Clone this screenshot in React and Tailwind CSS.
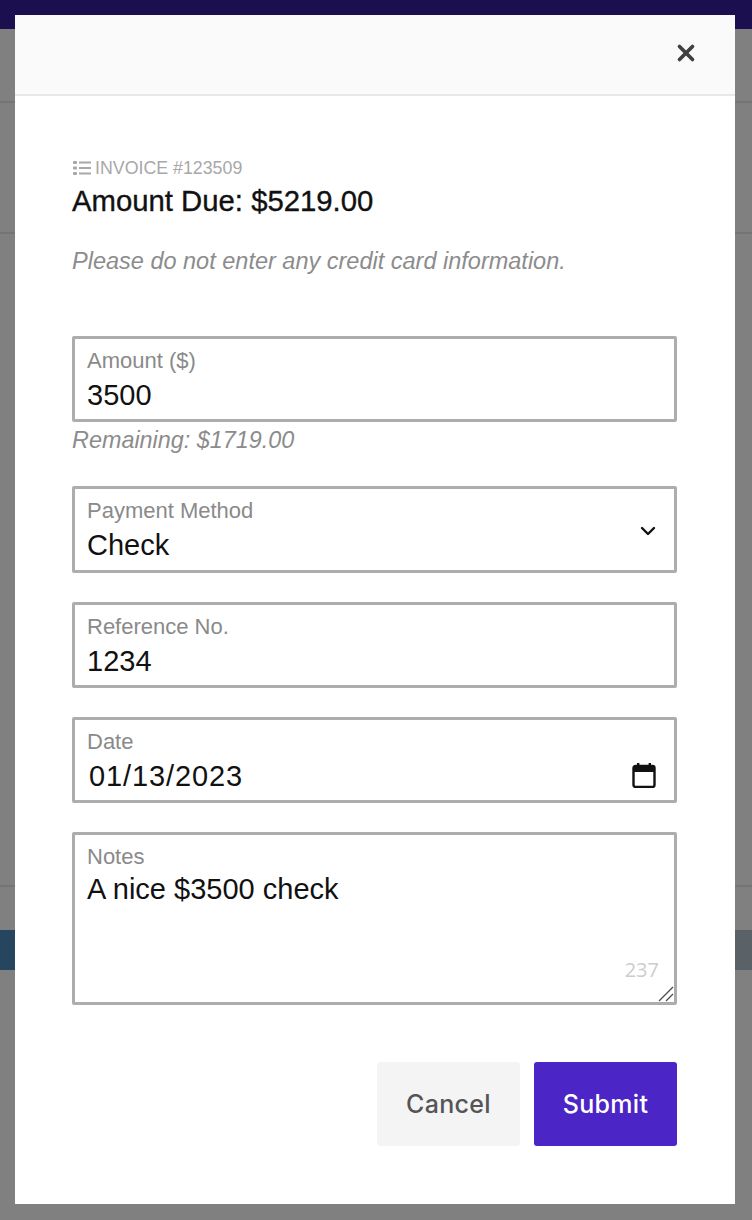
import React from 'react';
import { X, ChevronDown } from 'lucide-react';

const helvetica = "font-['Liberation_Sans',Arial,sans-serif]";
const valueText = 'text-[29px] leading-[32px] text-[#111111]';

function Field({ label, height, children, right }) {
  return (
    <div className={`relative rounded-[2px] border-[3px] border-[#adadad] px-3 pt-[10px] ${height}`}>
      <div className="text-[22px] leading-[24px] text-[#8a8a8a]">{label}</div>
      {children}
      {right}
    </div>
  );
}

export default function App() {
  return (
    <div className="relative h-[1220px] w-[752px] overflow-hidden bg-[#808080]">
      {/* page behind the overlay */}
      <div className="h-[29px] bg-[#1b0f50]" />
      <div className="h-[74px] border-b-2 border-[#747474]" />
      <div className="h-[131px] border-b-2 border-[#747474]" />
      <div className="h-[653px] border-b-2 border-[#747474]" />
      <div className="mt-[43px] flex h-[40px]">
        <div className="w-[15px] bg-[#26455e]" />
        <div className="flex-1" />
        <div className="w-[17px] bg-[#5a6268]" />
      </div>

      {/* modal */}
      <div className={`absolute left-[15px] top-[15px] h-[1189px] w-[720px] bg-white ${helvetica}`}>
        <div className="flex h-[81px] items-start justify-end border-b-2 border-[#e8e8e8] bg-[#fafafa] pr-[36px] pt-[25px]">
          <X size={26} strokeWidth={3.4} className="text-[#404040]" />
        </div>

        <div className="pl-[57px] pr-[58px] pt-[62px]">
          <div className="flex items-center gap-[4px] text-[17.8px] leading-[20px] text-[#a8a8a8]">
            <svg width="19" height="16" viewBox="0 0 19 16" fill="#a8a8a8">
              <rect x="1" y="1" width="4" height="3" rx="1" />
              <rect x="1" y="6.5" width="4" height="3" rx="1" />
              <rect x="1" y="12" width="4" height="3" rx="1" />
              <rect x="7" y="1.5" width="12" height="2" />
              <rect x="7" y="7" width="12" height="2" />
              <rect x="7" y="12.5" width="12" height="2" />
            </svg>
            <span>INVOICE #123509</span>
          </div>
          <div className="mt-[7px] text-[29.3px] leading-[32px] text-[#111111] [-webkit-text-stroke:0.35px_#111111]">
            Amount Due: $5219.00
          </div>
          <div className="mt-[30px] text-[23.5px] italic leading-[28px] text-[#8c8c8c]">
            Please do not enter any credit card information.
          </div>

          <div className="mt-[61px]">
            <Field label="Amount ($)" height="h-[86px]">
              <div className={`mt-[6px] ${valueText}`}>3500</div>
            </Field>
            <div className="mt-[4px] text-[23.4px] italic leading-[28px] text-[#8c8c8c]">Remaining: $1719.00</div>
          </div>

          <div className="mt-[32px] flex flex-col gap-[29px]">
            <Field
              label="Payment Method"
              height="h-[87px]"
              right={<ChevronDown size={24} strokeWidth={2.4} className="absolute right-[14px] top-[30px] text-[#111111]" />}
            >
              <div className={`mt-[6px] ${valueText}`}>Check</div>
            </Field>
            <Field label="Reference No." height="h-[86px]">
              <div className={`mt-[6px] ${valueText}`}>1234</div>
            </Field>
            <Field
              label="Date"
              height="h-[86px]"
              right={
                <svg width="24" height="26" viewBox="0 0 24 26" className="absolute right-[18px] top-[42px]">
                  <rect x="1.5" y="4" width="21" height="21" rx="2" fill="none" stroke="#111111" strokeWidth="2.4" />
                  <rect x="1.5" y="4" width="21" height="6" fill="#111111" />
                  <rect x="5" y="1" width="2.4" height="4" fill="#111111" />
                  <rect x="16.6" y="1" width="2.4" height="4" fill="#111111" />
                </svg>
              }
            >
              <div className={`mt-[6px] pl-[2px] tracking-[0.9px] ${valueText}`}>01/13/2023</div>
            </Field>
            <Field
              label="Notes"
              height="h-[173px]"
              right={
                <>
                  <span className="absolute bottom-[20px] right-[15px] font-['Open_Sans',sans-serif] text-[20px] leading-[24px] text-[#cccccc]">237</span>
                  <svg width="16" height="16" viewBox="0 0 16 16" className="absolute bottom-0 right-0" stroke="#4a4a4a" strokeWidth="1.2" fill="none">
                    <path d="M1 15L15 1" />
                    <path d="M8 15L15 8" />
                  </svg>
                </>
              }
            >
              <div className={`mt-[4px] ${valueText}`}>A nice $3500 check</div>
            </Field>
          </div>

          <div className="mt-[57px] flex justify-end gap-[14px] font-['Inter',sans-serif] text-[25px] font-medium tracking-[0.3px]">
            <button className="h-[84px] w-[143px] rounded-[3px] bg-[#f4f4f4] pt-[1px] text-[#555555]">Cancel</button>
            <button className="h-[84px] w-[143px] rounded-[3px] bg-[#4b25c5] pt-[1px] text-white">Submit</button>
          </div>
        </div>
      </div>
    </div>
  );
}
